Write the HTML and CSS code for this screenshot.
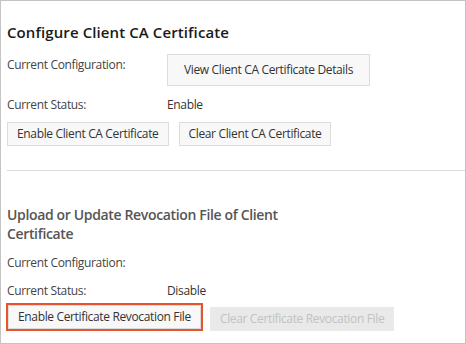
FILE: index.html
```html
<!DOCTYPE html>
<html>
<head>
<meta charset="utf-8">
<link rel="stylesheet" href="styles.css">
</head>
<body>
<div class="panel">
  <section class="sec sec-ca">
    <h2 class="title">Configure Client CA Certificate</h2>
    <div class="row row-config">
      <span class="label">Current Configuration:</span>
      <button class="btn btn-tall">View Client CA Certificate Details</button>
    </div>
    <div class="row row-status">
      <span class="label">Current Status:</span>
      <span class="value">Enable</span>
    </div>
    <div class="actions">
      <button class="btn">Enable Client CA Certificate</button>
      <button class="btn">Clear Client CA Certificate</button>
    </div>
  </section>
  <hr class="divider">
  <section class="sec sec-crl">
    <h2 class="title title-sub">Upload or Update Revocation File of Client Certificate</h2>
    <div class="row row-config2">
      <span class="label">Current Configuration:</span>
    </div>
    <div class="row row-status2">
      <span class="label">Current Status:</span>
      <span class="value">Disable</span>
    </div>
    <div class="actions actions-crl">
      <span class="highlight"><button class="btn">Enable Certificate Revocation File</button></span>
      <button class="btn btn-disabled" disabled>Clear Certificate Revocation File</button>
    </div>
  </section>
</div>
</body>
</html>
```

FILE: styles.css
```css
* { box-sizing: border-box; }
html, body { margin: 0; padding: 0; background: #fff; }
body {
  font-family: "Open Sans", "Noto Sans", sans-serif;
  font-size: 12px;
  letter-spacing: -0.35px;
  color: #333;
}
.panel {
  width: 466px;
  height: 344px;
  border: 1px solid #c4c4c4;
  padding: 21px 0 0 6px;
  overflow: hidden;
}
.title {
  margin: 0;
  font-size: 15px;
  font-weight: 600;
  line-height: 20px;
  letter-spacing: 0.1px;
  color: #1a1a1a;
}
.title-sub {
  color: #555;
  font-size: 14px;
  font-weight: 600;
  letter-spacing: -0.35px;
  width: 300px;
  line-height: 19px;
}
.row {
  display: grid;
  grid-template-columns: 160px auto;
  justify-items: start;
  align-items: start;
  line-height: 20px;
}
.label { color: #444; }
.value { color: #333; }
.row-config { margin-top: 12px; }
.row-config .label { padding-top: 1px; }
.row-status { margin-top: 9px; }
.actions {
  display: flex;
  gap: 10px;
  margin-top: 7px;
}
.btn {
  font-family: inherit;
  font-size: 12px;
  letter-spacing: inherit;
  color: #333;
  background: #f8f8f8;
  border: 1px solid #dcdcdc;
  height: 24px;
  padding: 0 9px;
  margin: 0;
  line-height: 22px;
  white-space: nowrap;
}
.btn-tall {
  height: 32px;
  padding: 0 16px;
}
.divider {
  border: 0;
  border-top: 1px solid #dcdcdc;
  margin: 24px 0 0 0;
}
.sec-crl { padding-top: 34px; }
.row-config2 { margin-top: 10px; }
.row-status2 { margin-top: 8px; }
.actions-crl { margin-top: 2px; gap: 7px; align-items: flex-end; }
.highlight {
  display: inline-flex;
  border: 2px solid #e8532f;
  margin-left: -1px;
}
.highlight .btn { border-color: #dcdcdc; }
.btn-disabled {
  background: #e9e9e9;
  border-color: #e9e9e9;
  color: #c2c2c2;
}
```
